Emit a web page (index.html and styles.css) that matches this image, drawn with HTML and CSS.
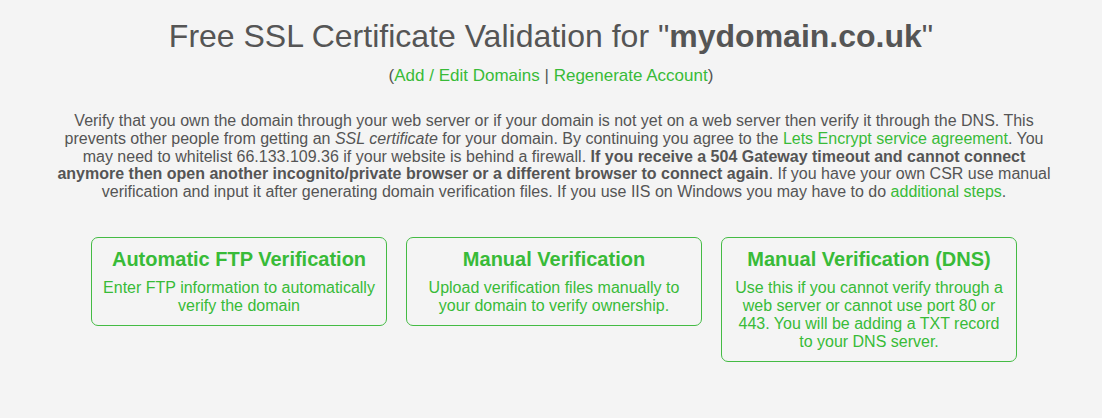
FILE: index.html
```html
<!DOCTYPE html>
<html>
<head>
<meta charset="utf-8">
<link rel="stylesheet" href="styles.css">
</head>
<body>
<div class="page">
  <h1 class="title">Free SSL Certificate Validation for "<b>mydomain.co.uk</b>"</h1>
  <p class="sublinks">(<a href="#">Add / Edit Domains</a> | <a href="#">Regenerate Account</a>)</p>
  <p class="intro">Verify that you own the domain through your web server or if your domain is not yet on a web server then verify it through the DNS. This prevents other people from getting an <i>SSL certificate</i> for your domain. By continuing you agree to the <a href="#">Lets Encrypt service agreement</a>. You may need to whitelist 66.133.109.36 if your website is behind a firewall. <b>If you receive a 504 Gateway timeout and cannot connect anymore then open another incognito/private browser or a different browser to connect again</b>. If you have your own CSR use manual verification and input it after generating domain verification files. If you use IIS on Windows you may have to do <a href="#">additional steps</a>.</p>
  <div class="cards">
    <a class="card" href="#">
      <h2 class="card-title">Automatic FTP Verification</h2>
      <p class="card-text">Enter FTP information to automatically verify the domain</p>
    </a>
    <a class="card" href="#">
      <h2 class="card-title">Manual Verification</h2>
      <p class="card-text">Upload verification files manually to your domain to verify ownership.</p>
    </a>
    <a class="card" href="#">
      <h2 class="card-title">Manual Verification (DNS)</h2>
      <p class="card-text">Use this if you cannot verify through a web server or cannot use port 80 or 443. You will be adding a TXT record to your DNS server.</p>
    </a>
  </div>
</div>
</body>
</html>
```

FILE: styles.css
```css
html, body {
  margin: 0;
  padding: 0;
  background: #f4f4f4;
}
body {
  font-family: "Liberation Sans", Arial, sans-serif;
  color: #555555;
}
a {
  color: #38bb38;
  text-decoration: none;
}
.page {
  width: 1000px;
  margin: 0 auto;
  padding-top: 16px;
}
.title {
  margin: 0;
  font-size: 32px;
  font-weight: normal;
  text-align: center;
  line-height: 40px;
}
.title b {
  font-weight: bold;
}
.sublinks {
  margin: 10px 0 0;
  font-size: 17px;
  line-height: 20px;
  text-align: center;
}
.intro {
  margin: 26px 0 0;
  padding-left: 6px;
  font-size: 16px;
  line-height: 17.75px;
  text-align: center;
}
.cards {
  display: flex;
  justify-content: center;
  align-items: flex-start;
  gap: 19px;
  margin: 36px 0 0 6px;
}
.card {
  display: block;
  width: 296px;
  box-sizing: border-box;
  border: 1px solid #44bb44;
  border-radius: 7px;
  padding: 9px 10px 10px;
  text-align: center;
  color: #38bb38;
}
.card-title {
  margin: 0;
  font-size: 20px;
  font-weight: bold;
  line-height: 24px;
}
.card-text {
  margin: 8px 0 0;
  font-size: 16px;
  line-height: 18px;
}
```
